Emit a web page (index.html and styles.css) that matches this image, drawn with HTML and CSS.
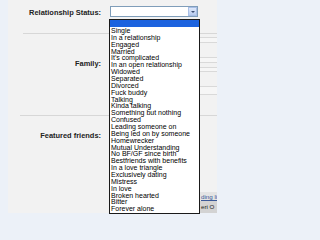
FILE: index.html
```html
<!DOCTYPE html>
<html>
<head>
<meta charset="utf-8">
<link rel="stylesheet" href="styles.css">
</head>
<body>
<div class="page">
  <div class="panel">
    <div class="row row-status">
      <div class="label">Relationship Status:</div>
      <div class="value">
        <div class="select"><span class="arrow-btn"><span class="arrow"></span></span></div>
      </div>
    </div>
    <div class="sep sep-1"></div>
    <div class="row row-family">
      <div class="label">Family:</div>
      <div class="value value-col">
        <div class="field f-a"></div>
        <div class="field f-b"></div>
        <div class="field f-c"></div>
        <div class="field f-d"></div>
      </div>
    </div>
    <div class="sep sep-2"></div>
    <div class="row row-featured">
      <div class="label">Featured friends:</div>
      <div class="value value-bottom">
        <div class="actions">
          <div class="link-row"><a class="link">ding li</a></div>
          <div class="btn-row">eri O</div>
        </div>
      </div>
    </div>
  </div>

  <div class="dropdown-list">
    <div class="opt-selected"></div>
    <ul class="options">
      <li>Single</li>
      <li>In a relationship</li>
      <li>Engaged</li>
      <li>Married</li>
      <li>It's complicated</li>
      <li>In an open relationship</li>
      <li>Widowed</li>
      <li>Separated</li>
      <li>Divorced</li>
      <li>Fuck buddy</li>
      <li>Talking</li>
      <li>Kinda talking</li>
      <li>Something but nothing</li>
      <li>Confused</li>
      <li>Leading someone on</li>
      <li>Being led on by someone</li>
      <li>Homewrecker</li>
      <li>Mutual Understanding</li>
      <li>No BF/GF since birth</li>
      <li>Bestfriends with benefits</li>
      <li>In a love triangle</li>
      <li>Exclusively dating</li>
      <li>Mistress</li>
      <li>In love</li>
      <li>Broken hearted</li>
      <li>Bitter</li>
      <li>Forever alone</li>
    </ul>
  </div>
</div>
</body>
</html>
```

FILE: styles.css
```css
html, body {
  margin: 0;
  padding: 0;
}
body {
  background: #ecf1f8;
  font-family: "Liberation Sans", Arial, sans-serif;
  color: #222;
}
.page {
  position: relative;
  width: 225px;
  height: 225px;
  overflow: hidden;
}
.panel {
  margin-left: 8px;
  width: 209px;
  height: 213px;
  background: #f2f2f2;
  overflow: hidden;
}
.row {
  display: flex;
  align-items: flex-start;
}
.label {
  width: 93px;
  flex: none;
  text-align: right;
  font-weight: bold;
  font-size: 7.45px;
  line-height: 11px;
  color: #222;
  white-space: nowrap;
}
.value {
  margin-left: 9px;
  width: 107px;
  flex: none;
}
.row-status {
  height: 33px;
}
.row-status .label {
  margin-top: 7px;
}
.row-status .value {
  margin-top: 6px;
}
.select {
  box-sizing: border-box;
  width: 88px;
  height: 11px;
  background: #fff;
  border: 1px solid #7f9db9;
  display: flex;
  justify-content: flex-end;
  align-items: center;
}
.arrow-btn {
  box-sizing: border-box;
  width: 9px;
  height: 9px;
  background: linear-gradient(#dfe9fb, #b7cbef);
  border: 1px solid #a9bfe6;
  display: flex;
  align-items: center;
  justify-content: center;
}
.arrow {
  width: 0;
  height: 0;
  border-left: 2px solid transparent;
  border-right: 2px solid transparent;
  border-top: 2px solid #3d4f75;
}
.sep {
  height: 1px;
  background: #d7d7d7;
}
.sep-1 {
  margin-left: 15px;
}
.sep-2 {
  margin-left: 12px;
}
.row-family {
  height: 81px;
}
.row-family .label {
  margin-top: 23.5px;
}
.value-col {
  display: flex;
  flex-direction: column;
}
.field {
  box-sizing: border-box;
  width: 130px;
  background: #f6f6f6;
  border: 1px solid #d9d9d9;
}
.f-a { margin-top: 3px; height: 6px; }
.f-b { margin-top: 14px; height: 6px; }
.f-c { margin-top: 4px; height: 5px; }
.f-d { margin-top: 14px; height: 9px; }
.row-featured {
  height: 97px;
}
.row-featured .label {
  margin-top: 13.5px;
}
.value-bottom {
  align-self: stretch;
  display: flex;
  flex-direction: column;
  justify-content: flex-end;
}
.actions {
  width: 107px;
  font-size: 6.2px;
  white-space: nowrap;
}
.link-row {
  height: 9px;
  line-height: 9px;
  background: #e4e4e4;
  padding-left: 91px;
}
.link {
  color: #3b5998;
  text-decoration: underline;
}
.btn-row {
  height: 12px;
  line-height: 12px;
  background: #d3d3d3;
  padding-left: 91px;
  color: #222;
}
.dropdown-list {
  position: absolute;
  left: 109px;
  top: 19px;
  width: 91px;
  box-sizing: border-box;
  background: #fff;
  border: 1px solid #1a1a1a;
}
.opt-selected {
  height: 7px;
  background: #1c63df;
}
.options {
  list-style: none;
  margin: 0;
  padding: 1px 0 0 0;
}
.options li {
  height: 6.87px;
  line-height: 6.87px;
  font-size: 7px;
  padding-left: 1px;
  color: #000;
  white-space: nowrap;
}
```
